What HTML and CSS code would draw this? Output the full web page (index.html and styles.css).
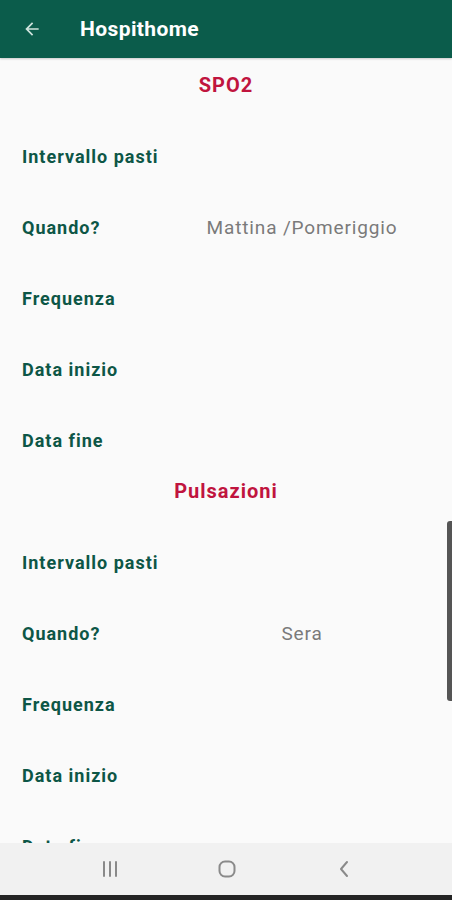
FILE: index.html
```html
<!DOCTYPE html>
<html lang="it">
<head>
<meta charset="utf-8">
<title>Hospithome</title>
<link rel="stylesheet" href="styles.css">
</head>
<body>
<div class="screen">
  <header class="appbar">
    <svg class="back" width="20" height="20" viewBox="0 0 24 24"><path d="M20 11H7.83l5.59-5.59L12 4l-8 8 8 8 1.41-1.41L7.83 13H20v-2z" fill="#cfe3dd"/></svg>
    <span class="title">Hospithome</span>
  </header>
  <main class="content">
    <section class="group">
      <h2 class="group-title">SPO2</h2>
      <div class="row"><span class="label">Intervallo pasti</span><span class="value"></span></div>
      <div class="row"><span class="label">Quando?</span><span class="value">Mattina /Pomeriggio</span></div>
      <div class="row"><span class="label">Frequenza</span><span class="value"></span></div>
      <div class="row"><span class="label">Data inizio</span><span class="value"></span></div>
      <div class="row"><span class="label">Data fine</span><span class="value"></span></div>
    </section>
    <section class="group">
      <h2 class="group-title">Pulsazioni</h2>
      <div class="row"><span class="label">Intervallo pasti</span><span class="value"></span></div>
      <div class="row"><span class="label">Quando?</span><span class="value">Sera</span></div>
      <div class="row"><span class="label">Frequenza</span><span class="value"></span></div>
      <div class="row"><span class="label">Data inizio</span><span class="value"></span></div>
      <div class="row"><span class="label">Data fine</span><span class="value"></span></div>
    </section>
  </main>
  <div class="scrollbar"></div>
  <nav class="navbar">
    <svg width="20" height="18" viewBox="0 0 20 18"><path d="M4 2v14M10 2v14M16 2v14" stroke="#8a8a8a" stroke-width="2" stroke-linecap="round" fill="none"/></svg>
    <svg width="20" height="20" viewBox="0 0 20 20"><rect x="2.5" y="2.5" width="15" height="15" rx="5.5" stroke="#8a8a8a" stroke-width="2" fill="none"/></svg>
    <svg width="20" height="20" viewBox="0 0 20 20"><path d="M13 3l-6 7 6 7" stroke="#8a8a8a" stroke-width="2" stroke-linecap="round" stroke-linejoin="round" fill="none"/></svg>
  </nav>
</div>
</body>
</html>
```
FILE: styles.css
```css
* { box-sizing: border-box; }
html, body { margin: 0; padding: 0; }
body {
  font-family: Roboto, "Noto Sans", "Liberation Sans", sans-serif;
  background: #fafafa;
}
.screen {
  position: relative;
  width: 452px;
  height: 900px;
  overflow: hidden;
  background: #fafafa;
}
.appbar {
  height: 58px;
  background: #0b5c4b;
  display: flex;
  align-items: center;
  padding-left: 22px;
  box-shadow: 0 1px 2px rgba(0,0,0,0.2);
  position: relative;
  z-index: 2;
}
.back { margin-right: 38px; }
.title {
  color: #ffffff;
  font-size: 21px;
  font-weight: 700;
  letter-spacing: 0.4px;
}
.content {
  padding-top: 12px;
}
.group-title {
  margin: 0;
  height: 51px;
  padding-top: 3px;
  line-height: 25px;
  text-align: center;
  color: #c0143e;
  font-size: 20px;
  font-weight: 700;
  letter-spacing: 1px;
}
.row {
  height: 71px;
  display: grid;
  grid-template-columns: 152px 1fr;
  align-items: center;
  padding: 0 22px;
}
.label {
  color: #0d5646;
  font-size: 18px;
  font-weight: 700;
  letter-spacing: 1px;
  white-space: nowrap;
}
.value {
  color: #7a7a7a;
  font-size: 19px;
  letter-spacing: 0.85px;
  text-align: center;
  white-space: nowrap;
}
.scrollbar {
  position: absolute;
  right: 0;
  top: 521px;
  width: 5px;
  height: 180px;
  background: #555555;
  border-radius: 3px 0 0 3px;
}
.navbar {
  position: absolute;
  left: 0;
  right: 0;
  bottom: 0;
  height: 57px;
  background: #f1f1f1;
  border-bottom: 5px solid #242424;
  display: flex;
  justify-content: space-between;
  align-items: center;
  padding: 0 98px 0 100px;
}
```
